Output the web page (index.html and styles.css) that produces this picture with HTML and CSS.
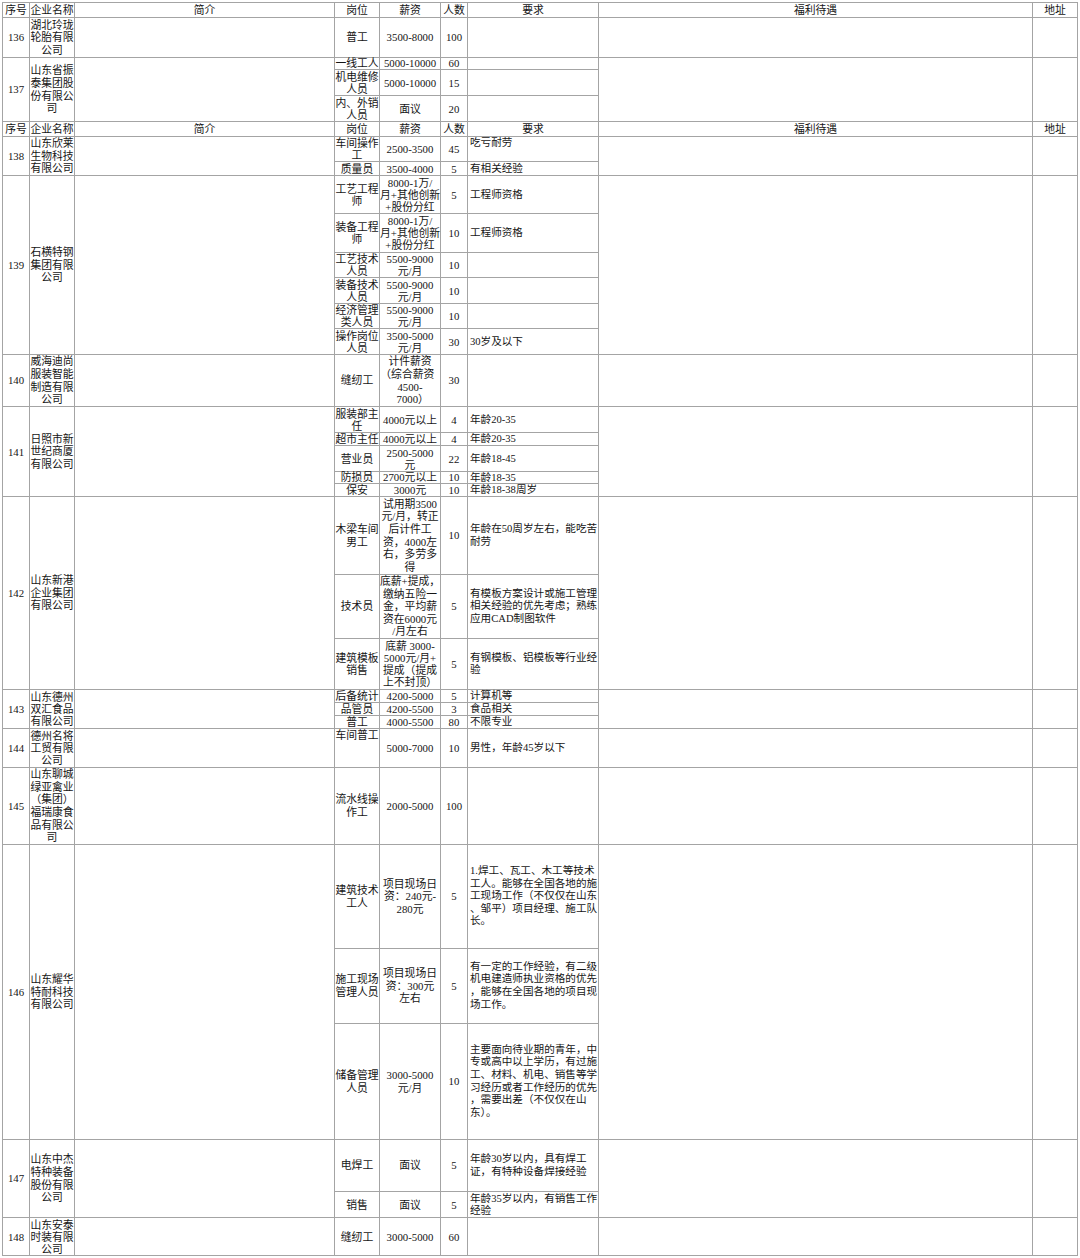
FILE: index.html
```html
<!DOCTYPE html>
<html lang="zh-CN">
<head>
<meta charset="utf-8">
<title>招聘信息</title>
<link rel="stylesheet" href="styles.css">
</head>
<body>
<table class="sheet">
<colgroup>
<col class="c-no"><col class="c-co"><col class="c-intro"><col class="c-job"><col class="c-pay"><col class="c-num"><col class="c-req"><col class="c-ben"><col class="c-addr">
</colgroup>
<tbody>
<tr class="h15 head"><td>序号</td><td>企业名称</td><td>简介</td><td>岗位</td><td>薪资</td><td>人数</td><td>要求</td><td>福利待遇</td><td>地址</td></tr>

<tr class="h40 loose"><td>136</td><td>湖北玲珑<br>轮胎有限<br>公司</td><td></td><td>普工</td><td>3500-8000</td><td>100</td><td class="req"></td><td></td><td></td></tr>

<tr class="h12"><td rowspan="3">137</td><td rowspan="3" class="loose">山东省振<br>泰集团股<br>份有限公<br>司</td><td rowspan="3"></td><td>一线工人</td><td>5000-10000</td><td>60</td><td class="req"></td><td rowspan="3"></td><td rowspan="3"></td></tr>
<tr class="h26"><td>机电维修<br>人员</td><td>5000-10000</td><td>15</td><td class="req"></td></tr>
<tr class="h26"><td>内、外销<br>人员</td><td>面议</td><td>20</td><td class="req"></td></tr>

<tr class="h15 head"><td>序号</td><td>企业名称</td><td>简介</td><td>岗位</td><td>薪资</td><td>人数</td><td>要求</td><td>福利待遇</td><td>地址</td></tr>

<tr class="h25"><td rowspan="2">138</td><td rowspan="2" class="loose">山东欣莱<br>生物科技<br>有限公司</td><td rowspan="2"></td><td>车间操作<br>工</td><td>2500-3500</td><td>45</td><td class="req top">吃亏耐劳</td><td rowspan="2"></td><td rowspan="2"></td></tr>
<tr class="h14"><td>质量员</td><td>3500-4000</td><td>5</td><td class="req">有相关经验</td></tr>

<tr class="h38"><td rowspan="6">139</td><td rowspan="6" class="loose">石横特钢<br>集团有限<br>公司</td><td rowspan="6"></td><td>工艺工程<br>师</td><td>8000-1万/<br>月+其他创新<br>+股份分红</td><td>5</td><td class="req">工程师资格</td><td rowspan="6"></td><td rowspan="6"></td></tr>
<tr class="h39"><td>装备工程<br>师</td><td>8000-1万/<br>月+其他创新<br>+股份分红</td><td>10</td><td class="req">工程师资格</td></tr>
<tr class="h25"><td>工艺技术<br>人员</td><td>5500-9000<br>元/月</td><td>10</td><td class="req"></td></tr>
<tr class="h26"><td>装备技术<br>人员</td><td>5500-9000<br>元/月</td><td>10</td><td class="req"></td></tr>
<tr class="h25"><td>经济管理<br>类人员</td><td>5500-9000<br>元/月</td><td>10</td><td class="req"></td></tr>
<tr class="h26"><td>操作岗位<br>人员</td><td>3500-5000<br>元/月</td><td>30</td><td class="req">30岁及以下</td></tr>

<tr class="h52 loose"><td>140</td><td>威海迪尚<br>服装智能<br>制造有限<br>公司</td><td></td><td>缝纫工</td><td class="halt">计件薪资<br>（综合薪资<br>4500-<br>7000）</td><td>30</td><td class="req"></td><td></td><td></td></tr>

<tr class="h26"><td rowspan="5">141</td><td rowspan="5" class="loose">日照市新<br>世纪商厦<br>有限公司</td><td rowspan="5"></td><td>服装部主<br>任</td><td>4000元以上</td><td>4</td><td class="req">年龄20-35</td><td rowspan="5"></td><td rowspan="5"></td></tr>
<tr class="h13"><td>超市主任</td><td>4000元以上</td><td>4</td><td class="req">年龄20-35</td></tr>
<tr class="h26"><td>营业员</td><td>2500-5000<br>元</td><td>22</td><td class="req">年龄18-45</td></tr>
<tr class="h12"><td>防损员</td><td>2700元以上</td><td>10</td><td class="req">年龄18-35</td></tr>
<tr class="h13"><td>保安</td><td>3000元</td><td>10</td><td class="req">年龄18-38周岁</td></tr>

<tr class="h78 loose"><td rowspan="3">142</td><td rowspan="3">山东新港<br>企业集团<br>有限公司</td><td rowspan="3"></td><td>木梁车间<br>男工</td><td>试用期3500<br>元/月，转正<br>后计件工<br>资，4000左<br>右，多劳多<br>得</td><td>10</td><td class="req">年龄在50周岁左右，能吃苦<br>耐劳</td><td rowspan="3"></td><td rowspan="3"></td></tr>
<tr class="h64 loose"><td>技术员</td><td>底薪+提成，<br>缴纳五险一<br>金，平均薪<br>资在6000元<br>/月左右</td><td>5</td><td class="req">有模板方案设计或施工管理<br>相关经验的优先考虑；熟练<br>应用CAD制图软件</td></tr>
<tr class="h51"><td>建筑模板<br>销售</td><td>底薪 3000-<br>5000元/月+<br>提成（提成<br>上不封顶）</td><td>5</td><td class="req">有钢模板、铝模板等行业经<br>验</td></tr>

<tr class="h13"><td rowspan="3">143</td><td rowspan="3">山东德州<br>双汇食品<br>有限公司</td><td rowspan="3"></td><td>后备统计</td><td>4200-5000</td><td>5</td><td class="req">计算机等</td><td rowspan="3"></td><td rowspan="3"></td></tr>
<tr class="h13"><td>品管员</td><td>4200-5500</td><td>3</td><td class="req">食品相关</td></tr>
<tr class="h13"><td>普工</td><td>4000-5500</td><td>80</td><td class="req">不限专业</td></tr>

<tr class="h39"><td>144</td><td>德州名将<br>工贸有限<br>公司</td><td></td><td class="top">车间普工</td><td>5000-7000</td><td>10</td><td class="req">男性，年龄45岁以下</td><td></td><td></td></tr>

<tr class="h77 loose"><td>145</td><td>山东聊城<br>绿亚禽业<br>（集团）<br>福瑞康食<br>品有限公<br>司</td><td></td><td>流水线操<br>作工</td><td>2000-5000</td><td>100</td><td class="req"></td><td></td><td></td></tr>

<tr class="h104 loose"><td rowspan="3">146</td><td rowspan="3">山东耀华<br>特耐科技<br>有限公司</td><td rowspan="3"></td><td>建筑技术<br>工人</td><td>项目现场日<br>资：240元-<br>280元</td><td>5</td><td class="req">1.焊工、瓦工、木工等技术<br>工人。能够在全国各地的施<br>工现场工作（不仅仅在山东<br>、邹平）项目经理、施工队<br>长。</td><td rowspan="3"></td><td rowspan="3"></td></tr>
<tr class="h75 loose"><td>施工现场<br>管理人员</td><td>项目现场日<br>资：300元<br>左右</td><td>5</td><td class="req">有一定的工作经验，有二级<br>机电建造师执业资格的优先<br>，能够在全国各地的项目现<br>场工作。</td></tr>
<tr class="h116 loose"><td>储备管理<br>人员</td><td>3000-5000<br>元/月</td><td>10</td><td class="req">主要面向待业期的青年，中<br>专或高中以上学历，有过施<br>工、材料、机电、销售等学<br>习经历或者工作经历的优先<br>，需要出差（不仅仅在山<br>东）。</td></tr>

<tr class="h52 loose"><td rowspan="2">147</td><td rowspan="2">山东中杰<br>特种装备<br>股份有限<br>公司</td><td rowspan="2"></td><td>电焊工</td><td>面议</td><td>5</td><td class="req">年龄30岁以内，具有焊工<br>证，有特种设备焊接经验</td><td rowspan="2"></td><td rowspan="2"></td></tr>
<tr class="h26"><td>销售</td><td>面议</td><td>5</td><td class="req">年龄35岁以内，有销售工作<br>经验</td></tr>

<tr class="h38"><td>148</td><td>山东安泰<br>时装有限<br>公司</td><td></td><td>缝纫工</td><td>3000-5000</td><td>60</td><td class="req"></td><td></td><td></td></tr>
</tbody>
</table>
</body>
</html>
```

FILE: styles.css
```css
html, body {
  margin: 0;
  padding: 0;
  background: #ffffff;
}

.sheet {
  border-collapse: collapse;
  table-layout: fixed;
  width: 1075px;
  margin: 2px 0 0 2px;
  font-family: "Liberation Serif", "Noto Sans CJK SC", serif;
  font-size: 10.8px;
  line-height: 12px;
  color: #151515;
}

.c-no { width: 27px; }
.c-co { width: 45px; }
.c-intro { width: 260px; }
.c-job { width: 45px; }
.c-pay { width: 61px; }
.c-num { width: 27px; }
.c-req { width: 131px; }
.c-ben { width: 434px; }
.c-addr { width: 45px; }

.sheet td {
  border: 1px solid #a4a4a4;
  padding: 0;
  text-align: center;
  vertical-align: middle;
  white-space: nowrap;
}

.sheet td.req {
  text-align: left;
  padding-left: 2px;
  font-size: 10.6px;
}

.sheet td.top {
  vertical-align: top;
}

.sheet td.halt {
  font-feature-settings: "halt";
}

.h12 { height: 12px; }
.h13 { height: 13px; }
.h14 { height: 14px; }
.h15 { height: 15px; }
.h25 { height: 25px; }
.h26 { height: 26px; }
.h38 { height: 38px; }
.h39 { height: 39px; }
.h40 { height: 40px; }
.h51 { height: 51px; }
.h52 { height: 52px; }
.h64 { height: 64px; }
.h75 { height: 75px; }
.h77 { height: 77px; }
.h78 { height: 78px; }
.h104 { height: 104px; }
.h116 { height: 116px; }

.h12 td { line-height: 11px; }

.sheet .loose,
.sheet .loose td { line-height: 12.6px; }
```
